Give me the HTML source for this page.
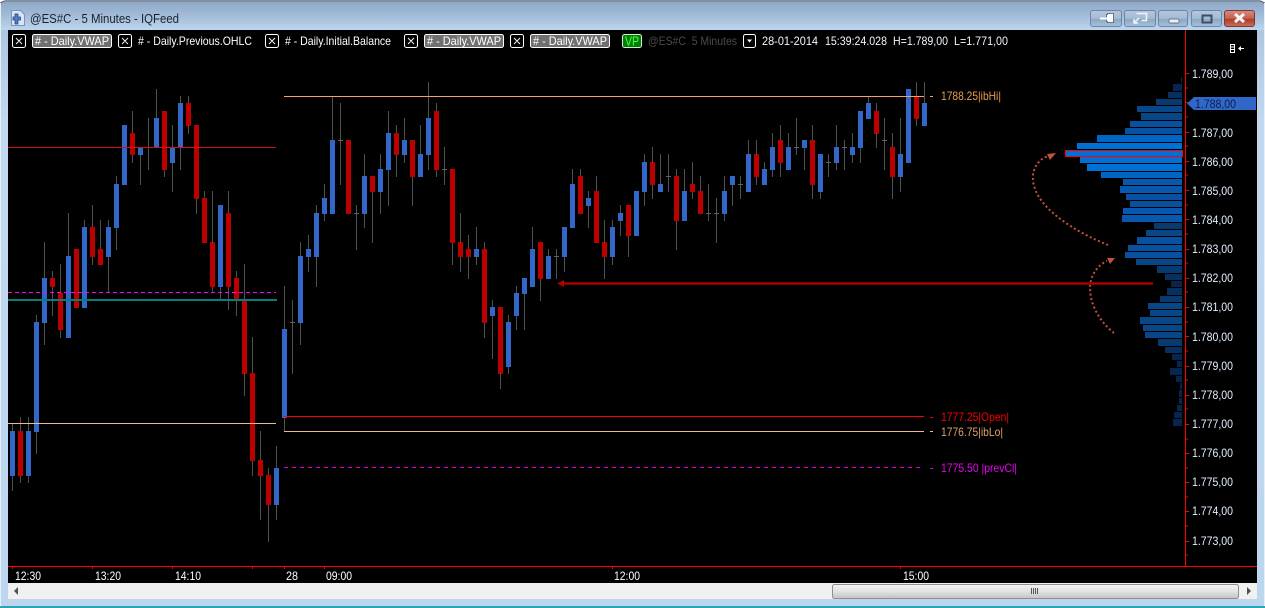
<!DOCTYPE html>
<html><head><meta charset="utf-8"><title>@ES#C - 5 Minutes - IQFeed</title>
<style>
html,body{margin:0;padding:0;width:1265px;height:608px;overflow:hidden;background:#fff}
svg{display:block}
text{font-family:"Liberation Sans",Arial,sans-serif;font-size:12px;white-space:pre}
.w{fill:#fff}.a{fill:#e4eeff}
.c{shape-rendering:crispEdges;fill:none}
</style></head><body>
<svg width="1265" height="608" viewBox="0 0 1265 608" xmlns="http://www.w3.org/2000/svg">
<defs>
<linearGradient id="t" x1="0" y1="0" x2="0" y2="1"><stop offset="0" stop-color="#8ea8c8"/><stop offset=".5" stop-color="#a3bcd8"/><stop offset="1" stop-color="#bdd6ee"/></linearGradient>
<linearGradient id="l" x1="0" y1="0" x2="0" y2="1"><stop offset="0" stop-color="#a8c0dc"/><stop offset=".2" stop-color="#c2d8f0"/><stop offset="1" stop-color="#bcd6f0"/></linearGradient>
<linearGradient id="b" x1="0" y1="0" x2="0" y2="1"><stop offset="0" stop-color="#b4c8de"/><stop offset=".5" stop-color="#a4bbd4"/><stop offset=".55" stop-color="#8ca7c4"/><stop offset="1" stop-color="#a8c2dc"/></linearGradient>
<linearGradient id="r" x1="0" y1="0" x2="0" y2="1"><stop offset="0" stop-color="#d88c80"/><stop offset=".5" stop-color="#c4604f"/><stop offset=".55" stop-color="#b03a28"/><stop offset="1" stop-color="#c8705f"/></linearGradient>
<linearGradient id="s" x1="0" y1="0" x2="0" y2="1"><stop offset="0" stop-color="#f4f4f4"/><stop offset=".5" stop-color="#e2e2e2"/><stop offset="1" stop-color="#c4c4c4"/></linearGradient>
</defs>

<!-- frame -->
<rect x="0" y="0" width="1265" height="608" rx="6" fill="url(#l)"/>
<rect x="0" y="2" width="1265" height="28" fill="url(#t)"/>
<path d="M0 7Q0 1 6 1H1259Q1265 1 1265 7" fill="none" stroke="#5a5f66" stroke-width="1"/>
<rect x="0" y="3" width="1" height="602" fill="#e8eef6"/>
<rect x="1264" y="3" width="1" height="602" fill="#e8eef6"/>
<rect x="0" y="606" width="1265" height="2" fill="#2aa5b8"/>

<!-- title -->
<path d="M11.5 10.5h9l4 4v11h-13z" fill="#d6e4f8" stroke="#7f93b8"/>
<path d="M15 14h3v3h2.500v3h-2.500v4h-3v-4h-2v-3h2z" fill="#4f7cc4" stroke="#23407c" stroke-width=".7"/>
<text x="30" y="23" style="font-size:13px" fill="#1a2230" textLength="149" lengthAdjust="spacingAndGlyphs">@ES#C - 5 Minutes - IQFeed</text>

<!-- caption buttons -->
<rect x="1090.5" y="10.5" width="31" height="16" rx="2.5" fill="url(#b)" stroke="#6d86a6"/>
<path d="M1100 18.500h6M1106.500 14.500h1v-1h6v9h-6v-1h-1z" fill="#fff" stroke="#4b5a6e" stroke-width=".8"/>
<path d="M1100 17.500h7v2h-7z" fill="#fff"/>
<rect x="1124.5" y="10.5" width="31" height="16" rx="2.5" fill="url(#b)" stroke="#6d86a6"/>
<path d="M1136.500 13.500h10v7h-5M1134 23l5-5M1134 19v4h4" fill="none" stroke="#eef4fa" stroke-width="1.500"/>
<rect x="1158.5" y="10.5" width="29" height="16" rx="2.5" fill="url(#b)" stroke="#6d86a6"/>
<rect x="1169" y="19" width="10" height="4" rx="1" fill="#e8eef4" stroke="#4b5a6e" stroke-width=".7"/>
<rect x="1191.5" y="10.5" width="30" height="16" rx="2.5" fill="url(#b)" stroke="#6d86a6"/>
<rect x="1202.5" y="15.5" width="9" height="7" fill="none" stroke="#3f4c60" stroke-width="2"/>
<rect x="1224.5" y="10.5" width="30" height="16" rx="2.5" fill="url(#r)" stroke="#7a3a34"/>
<path d="M1235 14l9 8M1244 14l-9 8" stroke="#f4f4f4" stroke-width="3"/>

<!-- chart area -->
<rect x="8" y="30" width="1249" height="553" fill="#000"/>

<!-- wicks -->
<path class="c" stroke="#505050" stroke-width="1" d="M12.5 423V491M20.5 417V483M28.5 417V483M36.5 315V454M44.5 242V345M52.5 271V316M60.5 264V338M68.5 213V338M76.5 249V308M84.5 220V308M92.5 205V265M100.5 220V265M108.5 220V293M116.5 176V250M124.5 125V185M132.5 111V163M140.5 148V185M148.5 118V170M156.5 89V147M164.5 111V177M172.5 125V192M180.5 96V170M188.5 96V134M196.5 125V214M204.5 191V243M212.5 191V293M220.5 205V300M228.5 191V310M236.5 271V316M244.5 264V396M252.5 337V476M260.5 431V520M268.5 468V542M276.5 446V520M284.5 286V431M292.5 300V374M300.5 242V345M308.5 235V272M316.5 205V287M324.5 184V221M332.5 97V214M340.5 103V185M348.5 140V214M356.5 205V250M364.5 154V228M372.5 176V243M380.5 154V214M388.5 111V206M396.5 125V177M404.5 118V163M412.5 140V206M420.5 125V177M428.5 82V170M436.5 103V177M444.5 147V185M452.5 169V265M460.5 213V272M468.5 235V279M476.5 227V265M484.5 242V338M492.5 300V359M500.5 307V389M508.5 315V374M516.5 286V330M524.5 278V330M532.5 227V287M540.5 242V301M548.5 249V279M556.5 249V279M564.5 227V272M572.5 169V228M580.5 169V214M588.5 191V228M596.5 176V243M604.5 220V279M612.5 220V265M620.5 205V236M628.5 205V257M636.5 191V236M644.5 154V206M652.5 147V199M660.5 154V192M668.5 154V192M676.5 169V250M684.5 169V221M692.5 162V199M700.5 176V214M708.5 184V221M716.5 198V243M724.5 176V221M732.5 176V206M740.5 176V199M748.5 140V192M756.5 140V185M764.5 162V185M772.5 133V177M780.5 125V177M788.5 133V170M796.5 118V155M804.5 140V170M812.5 125V199M820.5 154V199M828.5 154V177M836.5 125V170M844.5 140V170M852.5 133V163M860.5 111V163M868.5 97V119M876.5 103V148M884.5 118V170M892.5 133V199M900.5 118V192M908.5 89V163M916.5 82V126M924.5 82V126"/>
<!-- dojis -->
<path class="c" stroke="#606060" stroke-width="1" d="M146 147.5h5M290 322.5h5M338 140.5h5M354 213.5h5M442 169.5h5M554 256.5h5M666 176.5h5M706 213.5h5M714 213.5h5M738 184.5h5M794 147.5h5M826 162.5h5M842 147.5h5M882 140.5h5"/>
<!-- blue bodies -->
<path class="c" stroke="#3168c8" stroke-width="5" d="M12.5 431V476M28.5 431V476M36.5 322V432M44.5 278V323M68.5 256V338M84.5 227V308M108.5 227V257M116.5 184V228M124.5 125V185M140.5 148V155M156.5 118V147M172.5 148V163M180.5 103V147M220.5 205V287M276.5 468V505M284.5 329V418M300.5 256V323M308.5 249V257M316.5 213V257M324.5 198V214M332.5 140V214M364.5 176V214M380.5 169V192M388.5 133V170M404.5 140V155M420.5 154V177M428.5 118V155M476.5 249V257M492.5 307V316M508.5 322V367M516.5 293V316M524.5 278V294M532.5 249V287M548.5 256V279M564.5 227V257M572.5 184V228M588.5 198V206M612.5 227V257M620.5 213V221M636.5 191V236M644.5 162V192M660.5 184V192M684.5 191V221M724.5 191V214M732.5 176V185M748.5 154V192M764.5 169V185M772.5 147V170M788.5 147V170M804.5 140V148M820.5 154V192M836.5 147V163M852.5 147V155M860.5 111V148M868.5 103V119M900.5 154V177M908.5 89V163M924.5 103V126"/>
<!-- red bodies -->
<path class="c" stroke="#bc0000" stroke-width="5" d="M20.5 431V476M52.5 278V287M60.5 293V330M76.5 249V308M92.5 227V257M100.5 249V265M132.5 133V155M164.5 111V170M188.5 103V126M196.5 125V199M204.5 198V243M212.5 242V287M228.5 213V287M236.5 278V299M244.5 301V374M252.5 373V461M260.5 460V476M268.5 475V505M348.5 140V214M372.5 176V192M396.5 133V155M412.5 140V177M436.5 111V170M452.5 169V243M460.5 242V257M468.5 249V257M484.5 249V323M500.5 307V374M540.5 242V279M580.5 176V214M596.5 191V243M604.5 242V257M628.5 205V236M652.5 162V185M676.5 176V221M692.5 184V192M700.5 191V214M756.5 154V177M780.5 140V163M812.5 140V185M876.5 111V134M892.5 147V177M916.5 97V119"/>

<!-- lines over candles -->
<g class="c">
<path d="M8 292.5H276" stroke="#ff00ff" stroke-dasharray="4 3"/>
<path d="M8 300H277" stroke="#008080" stroke-width="2"/>
<path d="M8 147.5H276" stroke="#d4101a"/>
<path d="M8 423.5H276" stroke="#f0b890"/>
<path d="M284 96.5H924" stroke="#f4a460"/>
<path d="M284 416.5H924" stroke="#f00"/>
<path d="M284 431.5H924" stroke="#f0b890"/>
<path d="M284 467.5H924" stroke="#e000e0" stroke-dasharray="4 4"/>
<path d="M930 96.5h3" stroke="#f4a460"/>
<path d="M930 417.5h3" stroke="#f00"/>
<path d="M930 431.5h3" stroke="#f0b890"/>
<path d="M930 468.5h3" stroke="#e000e0"/>
</g>

<!-- level labels -->
<text x="941" y="100" fill="#e89c50" textLength="60" lengthAdjust="spacingAndGlyphs">1788.25|ibHi|</text>
<text x="941" y="421" fill="#f80000" textLength="68" lengthAdjust="spacingAndGlyphs">1777.25|Open|</text>
<text x="941" y="436" fill="#dca470" textLength="62" lengthAdjust="spacingAndGlyphs">1776.75|ibLo|</text>
<text x="941" y="472" fill="#e800f0" textLength="76" lengthAdjust="spacingAndGlyphs">1775.50 |prevCl|</text>

<!-- volume profile -->
<g class="c">
<g fill="#06264f">
<rect x="1181" y="77" width="1" height="6"/><rect x="1173" y="84" width="9" height="7"/>
<rect x="1171" y="281" width="11" height="6"/><rect x="1172" y="354" width="10" height="6"/>
<rect x="1177" y="361" width="5" height="6"/><rect x="1170" y="368" width="12" height="7"/>
<rect x="1176" y="376" width="6" height="6"/><rect x="1180" y="383" width="2" height="6"/>
<rect x="1179" y="390" width="3" height="7"/><rect x="1179" y="398" width="3" height="6"/>
<rect x="1177" y="405" width="5" height="6"/><rect x="1174" y="412" width="8" height="6"/>
<rect x="1173" y="419" width="9" height="7"/>
</g>
<g fill="#07305e">
<rect x="1168" y="92" width="14" height="6"/><rect x="1165" y="274" width="17" height="6"/>
<rect x="1167" y="288" width="15" height="7"/><rect x="1165" y="347" width="17" height="6"/>
</g>
<g fill="#083a70">
<rect x="1156" y="99" width="26" height="6"/><rect x="1154" y="223" width="28" height="6"/>
<rect x="1157" y="266" width="25" height="7"/><rect x="1160" y="296" width="22" height="6"/>
<rect x="1158" y="339" width="24" height="7"/>
</g>
<g fill="#094686">
<rect x="1137" y="106" width="45" height="6"/><rect x="1141" y="113" width="41" height="7"/>
<rect x="1146" y="230" width="36" height="6"/><rect x="1136" y="259" width="46" height="6"/>
<rect x="1148" y="303" width="34" height="6"/><rect x="1150" y="310" width="32" height="6"/>
<rect x="1140" y="317" width="42" height="7"/><rect x="1143" y="325" width="39" height="6"/>
<rect x="1145" y="332" width="37" height="6"/>
</g>
<g fill="#0850a0">
<rect x="1130" y="121" width="52" height="6"/><rect x="1125" y="128" width="57" height="6"/>
<rect x="1126" y="194" width="56" height="6"/><rect x="1130" y="201" width="52" height="6"/>
<rect x="1137" y="237" width="45" height="7"/><rect x="1128" y="245" width="54" height="6"/>
<rect x="1125" y="252" width="57" height="6"/>
</g>
<g fill="#0758ae">
<rect x="1123" y="179" width="59" height="6"/><rect x="1120" y="186" width="62" height="7"/>
<rect x="1123" y="208" width="59" height="6"/><rect x="1122" y="215" width="60" height="7"/>
</g>
<g fill="#0066c4"><rect x="1097" y="135" width="85" height="7"/><rect x="1101" y="172" width="81" height="6"/></g>
<g fill="#0070d4"><rect x="1077" y="143" width="105" height="6"/><rect x="1080" y="157" width="102" height="6"/><rect x="1087" y="164" width="95" height="7"/></g>
<rect x="1065.5" y="150.5" width="117" height="6" fill="#0070d8" stroke="#f00" stroke-width="1"/>
</g>

<!-- dotted annotation curves -->
<g fill="none" stroke="#c2523c" stroke-width="2" stroke-dasharray="2 2.500">
<path d="M1108 245C1075 232 1030 205 1033 175C1034 165 1042 157 1049 156"/>
<path d="M1114 333C1100 322 1090 305 1090 288C1090 275 1098 265 1107 261"/>
</g>
<path d="M1056 153L1047 154L1050 160Z" fill="#c2523c"/>
<path d="M1115 258L1107 258L1110 264Z" fill="#c2523c"/>

<!-- long arrow -->
<rect x="563" y="282" width="590" height="3" fill="#740000"/>
<rect x="563" y="283" width="590" height="1" fill="#b00000"/>
<path d="M557 283.5L564 280V287Z" fill="#b00000"/>

<!-- price axis -->
<path class="c" stroke="#f00" d="M1185.5 30V566M1186 73.5h3M1186 88h2M1186 102.5h3M1186 117h2M1186 132.5h3M1186 146h2M1186 161.5h3M1186 175h2M1186 190.5h3M1186 205h2M1186 219.5h3M1186 234h2M1186 249.5h3M1186 263h2M1186 278.5h3M1186 292h2M1186 307.5h3M1186 322h2M1186 336.5h3M1186 351h2M1186 366.5h3M1186 380h2M1186 395.5h3M1186 409h2M1186 424.5h3M1186 439h2M1186 453.5h3M1186 468h2M1186 482.5h3M1186 497h2M1186 511.5h3M1186 526h2M1186 541.5h3M1186 555h2"/>
<path d="M1187 103.5L1194 97H1256V110H1194Z" fill="#3168c8"/>
<g class="a">
<text x="1192" y="78" textLength="41" lengthAdjust="spacingAndGlyphs">1.789,00</text>
<text x="1192" y="137" textLength="41" lengthAdjust="spacingAndGlyphs">1.787,00</text>
<text x="1192" y="166" textLength="41" lengthAdjust="spacingAndGlyphs">1.786,00</text>
<text x="1192" y="195" textLength="41" lengthAdjust="spacingAndGlyphs">1.785,00</text>
<text x="1192" y="224" textLength="41" lengthAdjust="spacingAndGlyphs">1.784,00</text>
<text x="1192" y="253" textLength="41" lengthAdjust="spacingAndGlyphs">1.783,00</text>
<text x="1192" y="282" textLength="41" lengthAdjust="spacingAndGlyphs">1.782,00</text>
<text x="1192" y="311" textLength="41" lengthAdjust="spacingAndGlyphs">1.781,00</text>
<text x="1192" y="341" textLength="41" lengthAdjust="spacingAndGlyphs">1.780,00</text>
<text x="1192" y="370" textLength="41" lengthAdjust="spacingAndGlyphs">1.779,00</text>
<text x="1192" y="399" textLength="41" lengthAdjust="spacingAndGlyphs">1.778,00</text>
<text x="1192" y="428" textLength="41" lengthAdjust="spacingAndGlyphs">1.777,00</text>
<text x="1192" y="457" textLength="41" lengthAdjust="spacingAndGlyphs">1.776,00</text>
<text x="1192" y="486" textLength="41" lengthAdjust="spacingAndGlyphs">1.775,00</text>
<text x="1192" y="515" textLength="41" lengthAdjust="spacingAndGlyphs">1.774,00</text>
<text x="1192" y="545" textLength="41" lengthAdjust="spacingAndGlyphs">1.773,00</text>
</g>
<text x="1195" y="108" fill="#0a1e50" textLength="41" lengthAdjust="spacingAndGlyphs">1.788,00</text>

<!-- top right mini icon -->
<path class="c" stroke="#fff" d="M1230.5 44.5h4v8h-4zM1230 47h5M1230 49.5h5"/>
<path d="M1238 48.500L1241 46V48H1244V49H1241V51Z" fill="#fff"/>

<!-- time axis -->
<path class="c" stroke="#f00" d="M8 566.5H1257M12.5 567v2M92.5 567v2M172.5 567v2M252.5 567v2M284.5 567v2M324.5 567v2M612.5 567v2M900.5 567v2"/>
<g class="w">
<text x="15" y="580" textLength="26" lengthAdjust="spacingAndGlyphs">12:30</text>
<text x="95" y="580" textLength="26" lengthAdjust="spacingAndGlyphs">13:20</text>
<text x="175" y="580" textLength="26" lengthAdjust="spacingAndGlyphs">14:10</text>
<text x="286" y="580" textLength="12" lengthAdjust="spacingAndGlyphs">28</text>
<text x="326" y="580" textLength="26" lengthAdjust="spacingAndGlyphs">09:00</text>
<text x="614" y="580" textLength="26" lengthAdjust="spacingAndGlyphs">12:00</text>
<text x="903" y="580" textLength="26" lengthAdjust="spacingAndGlyphs">15:00</text>
</g>

<!-- scrollbar -->
<rect x="8" y="583" width="1249" height="16" fill="#f0f0f0"/>
<path d="M18 587V595L14 591Z" fill="#505050"/>
<path d="M1247 587V595L1251 591Z" fill="#505050"/>
<rect x="832.5" y="584.5" width="406" height="14" rx="2" fill="url(#s)" stroke="#909090"/>
<path class="c" stroke="#555" d="M1031.5 588v6M1033.5 588v6M1035.5 588v6M1037.5 588v6"/>

<!-- legend bar -->
<g fill="#000" stroke="#fff">
<rect x="12.5" y="34.5" width="13" height="13" rx="2"/>
<rect x="118.5" y="34.5" width="13" height="13" rx="2"/>
<rect x="265.5" y="34.5" width="13" height="13" rx="2"/>
<rect x="404.5" y="34.5" width="13" height="13" rx="2"/>
<rect x="510.5" y="34.5" width="13" height="13" rx="2"/>
<rect x="743.5" y="34.5" width="12" height="13" rx="2"/>
</g>
<path stroke="#fff" stroke-width=".9" d="M16 38l6 6M22 38l-6 6M122 38l6 6M128 38l-6 6M269 38l6 6M275 38l-6 6M408 38l6 6M414 38l-6 6M514 38l6 6M520 38l-6 6"/>
<path d="M747 39.500h5l-2.500 3z" fill="#fff"/>
<g fill="#707070" stroke="#fff">
<rect x="32.5" y="34.5" width="79" height="13" rx="2"/>
<rect x="424.5" y="34.5" width="79" height="13" rx="2"/>
<rect x="530.5" y="34.5" width="79" height="13" rx="2"/>
</g>
<rect x="622.5" y="34.5" width="19" height="13" rx="2" fill="#008000" stroke="#d8e8d8"/>
<text x="35" y="45" fill="#fff" textLength="74" lengthAdjust="spacingAndGlyphs"># - Daily.VWAP</text>
<text x="427" y="45" fill="#fff" textLength="74" lengthAdjust="spacingAndGlyphs"># - Daily.VWAP</text>
<text x="533" y="45" fill="#fff" textLength="74" lengthAdjust="spacingAndGlyphs"># - Daily.VWAP</text>
<text x="138" y="45" fill="#fff" textLength="114" lengthAdjust="spacingAndGlyphs"># - Daily.Previous.OHLC</text>
<text x="285" y="45" fill="#fff" textLength="106" lengthAdjust="spacingAndGlyphs"># - Daily.Initial.Balance</text>
<text x="625" y="45.5" fill="#4cff4c" textLength="14" lengthAdjust="spacingAndGlyphs" style="font-size:13px">VP</text>
<text x="648" y="45" fill="#4a4a4a" textLength="89" lengthAdjust="spacingAndGlyphs">@ES#C  5 Minutes</text>
<text x="762" y="45" fill="#f0f6ff" textLength="56" lengthAdjust="spacingAndGlyphs">28-01-2014</text>
<text x="825" y="45" fill="#f0f6ff" textLength="62" lengthAdjust="spacingAndGlyphs">15:39:24.028</text>
<text x="893" y="45" fill="#f0f6ff" textLength="55" lengthAdjust="spacingAndGlyphs">H=1.789,00</text>
<text x="954" y="45" fill="#f0f6ff" textLength="54" lengthAdjust="spacingAndGlyphs">L=1.771,00</text>
</svg>
</body></html>
